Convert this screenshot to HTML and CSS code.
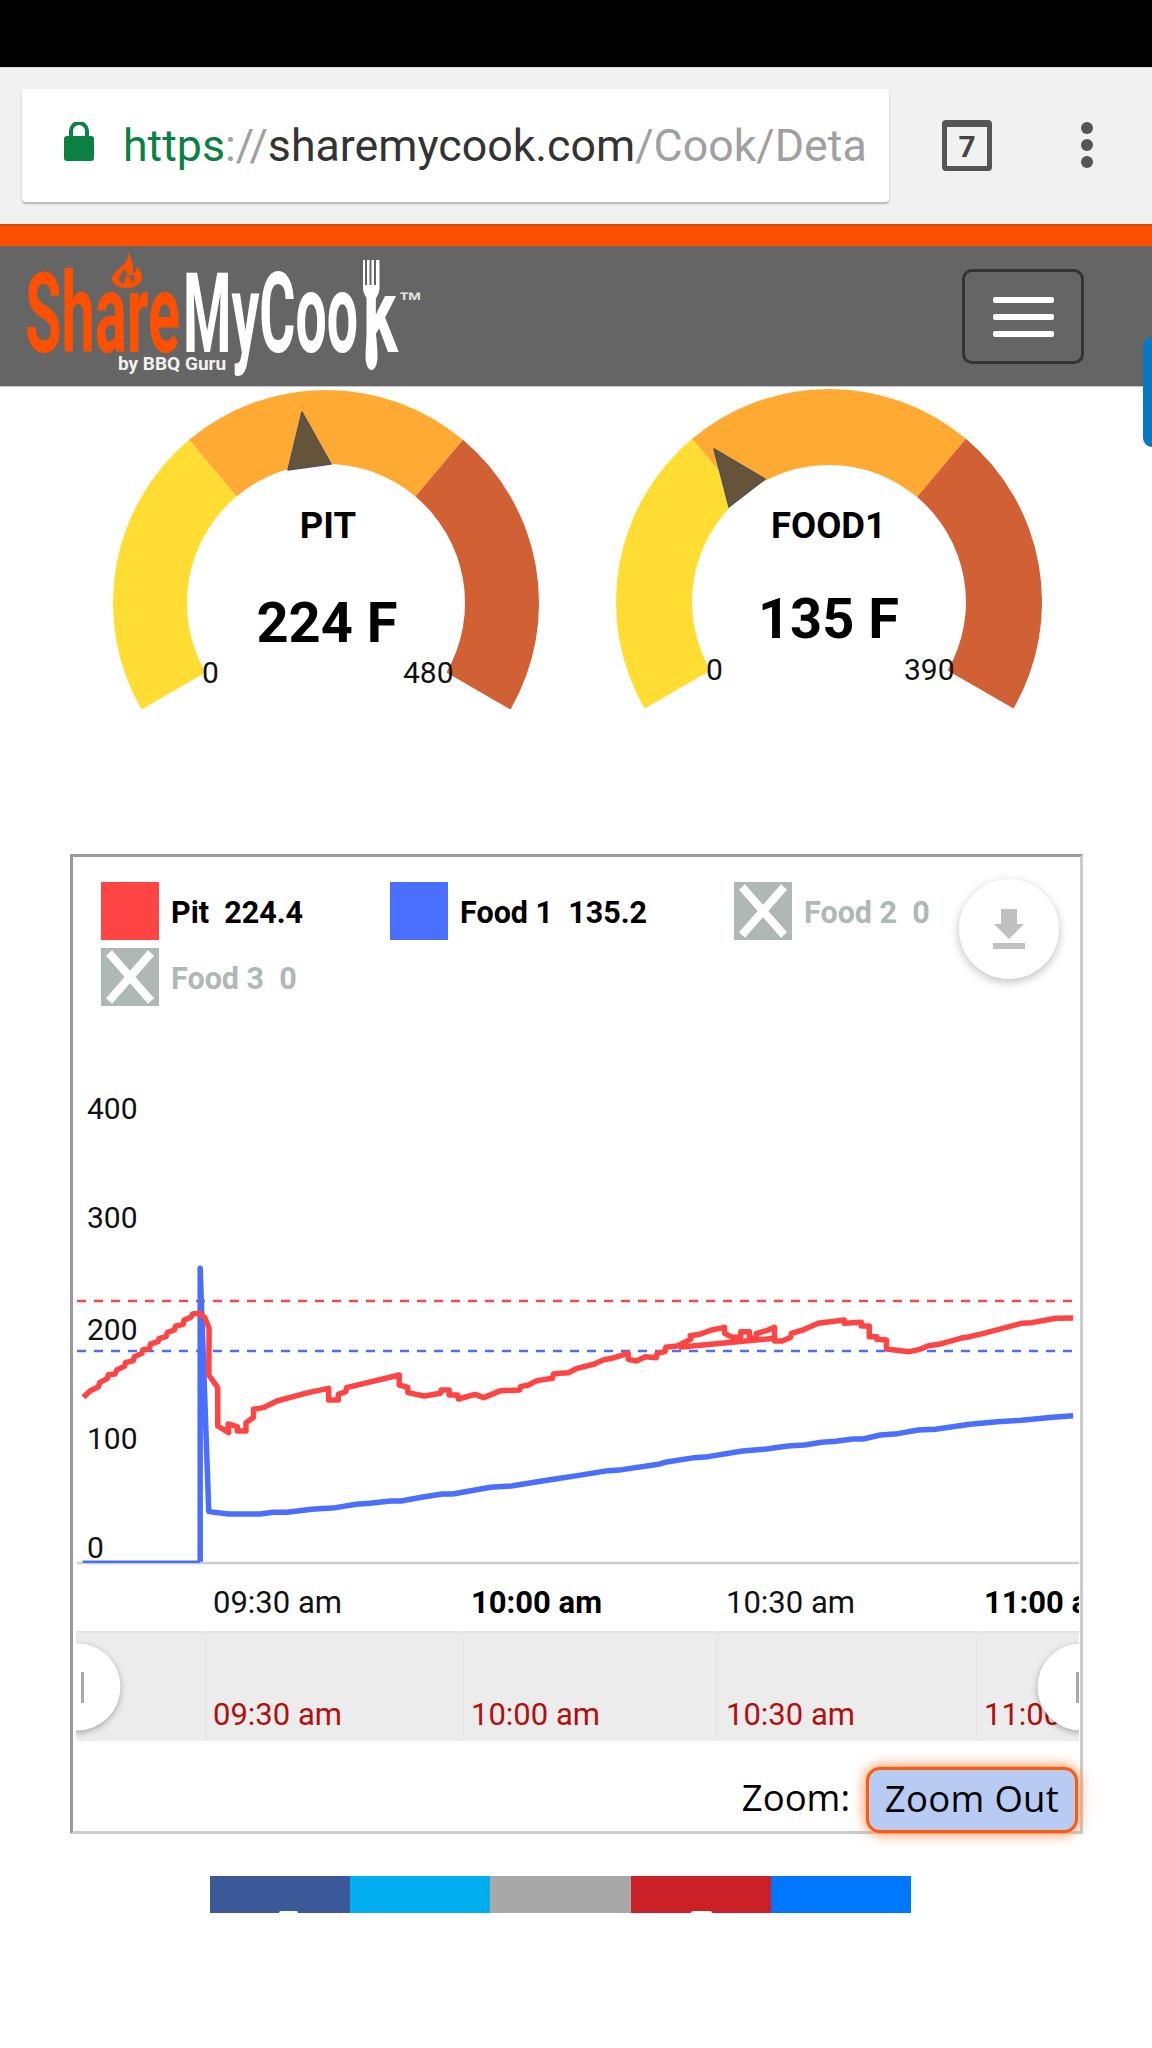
FILE: index.html
```html
<!DOCTYPE html>
<html lang="en">
<head>
<meta charset="utf-8">
<title>ShareMyCook</title>
<link rel="stylesheet" href="styles.css">
</head>
<body>
<div class="statusbar"></div>
<div class="browser">
  <div class="urlbox">
    <svg class="lock" viewBox="0 0 30 39"><path d="M7 16V9a8 8 0 0 1 16 0v7" fill="none" stroke="#0b8043" stroke-width="4"/><rect x="0" y="14" width="30" height="25" rx="3" fill="#0b8043"/></svg>
    <div class="url"><span class="u-green">https</span><span class="u-gray">://</span><span class="u-dark">sharemycook.com</span><span class="u-gray">/Cook/Deta</span></div>
  </div>
  <div class="tabs"><span>7</span></div>
  <div class="dots"><i></i><i></i><i></i></div>
</div>
<div class="orange"></div>
<header class="sitehead">
  <svg class="logo" viewBox="0 246 440 140">
    <defs><clipPath id="karm"><rect x="360" y="296" width="45" height="60"/></clipPath></defs>
    <path class="l-orange" fill-rule="evenodd" d="M126 247C131 256 127 262 121 267C115 272 111 276 112 280C113 285 119 288 127 288C136 288 142 283 142 277C142 272 139 269 137 266C137 270 135 273 133 273C134 266 131 256 126 247ZM124 268C124 273 118 276 119 280C120 283 123 284 125 284C123 280 125 277 128 274C129 278 133 279 131 283C135 281 136 276 133 275C129 277 126 273 124 268Z"/>
    <text class="l-text l-orange" x="25" y="352" textLength="155" lengthAdjust="spacingAndGlyphs">Share</text>
    <text class="l-text l-white" x="183" y="352" textLength="175" lengthAdjust="spacingAndGlyphs">MyCoo</text>
    <text class="l-text l-white" x="363" y="352" textLength="35" lengthAdjust="spacingAndGlyphs" clip-path="url(#karm)">k</text>
    <path class="l-white" d="M363 260h2v25h2v-25h2.500v25h2v-25h2.500v25h2v-25h2.500l1 0v28c0 7-5 11-6 16c0 16 4 36 4 52c0 9-3 14-6 14s-6-5-6-14c0-16 4-36 4-52c-1-5-6.500-9-6.500-16z"/>
    <text class="l-tm" x="399" y="309">™</text>
    <text class="l-by" x="118" y="370">by BBQ Guru</text>
  </svg>
  <button class="burger" type="button"><i></i><i></i><i></i></button>
</header>
<div class="sidetab"></div>

<section class="gauges">
  <svg class="gauge" viewBox="76 387 500 340">
    <path class="g-y" d="M141.500 709.500A213 213 0 0 1 189.100 439.800L236.600 496.500A139 139 0 0 0 205.600 672.500Z"/>
    <path class="g-o" d="M189.100 439.800A213 213 0 0 1 462.900 439.800L415.400 496.500A139 139 0 0 0 236.600 496.500Z"/>
    <path class="g-r" d="M462.900 439.800A213 213 0 0 1 510.500 709.500L446.400 672.500A139 139 0 0 0 415.400 496.500Z"/>
    <polygon class="g-needle" points="302,412 288,470 331,464"/>
    <text class="g-name" x="328" y="538">PIT</text>
    <text class="g-value" x="327" y="642">224 F</text>
    <text class="g-lim" x="202" y="683">0</text>
    <text class="g-lim" x="403" y="683">480</text>
  </svg>
  <svg class="gauge" viewBox="579 387 500 340">
    <path class="g-y" d="M644.500 708.500A213 213 0 0 1 692.100 438.800L740.900 497.100A137 137 0 0 0 710.400 670.500Z"/>
    <path class="g-o" d="M692.100 438.800A213 213 0 0 1 965.900 438.800L917.100 497.100A137 137 0 0 0 740.900 497.100Z"/>
    <path class="g-r" d="M965.900 438.800A213 213 0 0 1 1013.500 708.500L947.600 670.500A137 137 0 0 0 917.100 497.100Z"/>
    <polygon class="g-needle" points="714,449 765,479 729,507"/>
    <text class="g-name" x="828.500" y="538">FOOD1</text>
    <text class="g-value" x="828.500" y="638">135 F</text>
    <text class="g-lim" x="706" y="680">0</text>
    <text class="g-lim" x="904" y="680">390</text>
  </svg>
</section>

<section class="chart">
  <div class="legend">
    <div class="item w1"><span class="sw red"></span><span class="lbl">Pit  224.4</span></div>
    <div class="item w2"><span class="sw blue"></span><span class="lbl">Food 1  135.2</span></div>
    <div class="item w3 off"><svg class="sw" viewBox="0 0 58 58"><rect width="58" height="58" fill="#b0b8b6"/><path d="M8 5L50 53M50 5L8 53" stroke="#fff" stroke-width="8"/></svg><span class="lbl">Food 2  0</span></div>
    <div class="item w3 off"><svg class="sw" viewBox="0 0 58 58"><rect width="58" height="58" fill="#b0b8b6"/><path d="M8 5L50 53M50 5L8 53" stroke="#fff" stroke-width="8"/></svg><span class="lbl">Food 3  0</span></div>
  </div>
  <button class="dl" type="button"><svg viewBox="0 0 32 40"><path d="M8 0h16v15h7L16 30L1 15h7z" fill="#c0c0c0"/><rect y="34" width="32" height="6" fill="#c0c0c0"/></svg></button>

  <svg class="plot" viewBox="73 1014 1006 617">
    <text class="ax ax-y" x="87" y="1119">400</text>
    <text class="ax ax-y" x="87" y="1227.500">300</text>
    <text class="ax ax-y" x="87" y="1340">200</text>
    <text class="ax ax-y" x="87" y="1448.500">100</text>
    <text class="ax ax-y" x="87" y="1558">0</text>
    <line class="dash d-red" x1="77" y1="1301" x2="1077" y2="1301"/>
    <line class="dash d-blue" x1="77" y1="1351" x2="1077" y2="1351"/>
    <line class="axis" x1="77" y1="1563" x2="1079" y2="1563"/>
    <g transform="translate(60 1240) scale(.3444 .3333)">
      <polyline class="ln-base" points="66,965 407,965"/>
      <polyline class="ln ln-blue" points="407,965 407,85 432,815 490,822 580,822 620,817 660,817 730,808 800,803 860,793 900,790 960,783 990,783 1050,772 1110,762 1140,762 1250,742 1310,738 1400,723 1452,715"/>
      <polyline class="ln ln-red" points="68,472 88,452 112,440 115,428 138,415 140,404 160,402 165,390 188,378 190,368 213,362 216,350 238,340 240,330 260,325 263,312 285,305 288,295 308,290 312,277 332,270 336,258 358,253 360,240 380,232 385,222 405,220 420,232 433,265 432,405 458,443 458,558 490,578 488,552 515,560 515,573 540,573 540,548 562,532 562,508 590,503 630,483 720,458 780,445 780,480 808,480 808,463 830,455 832,443 985,405 985,435 1010,442 1010,458 1058,468 1105,460 1107,450 1130,450 1130,465 1155,465 1157,477 1205,463 1230,473 1280,452 1335,450 1337,440 1360,435 1385,422 1430,415 1433,402 1452,400"/>
    </g>
    <g transform="translate(560 1240) scale(.3444 .3333)">
      <polyline class="ln ln-blue" points="0,715 50,707 140,692 180,689 290,672 310,666 390,653 430,650 530,633 600,627 660,618 710,615 760,607 800,604 850,597 880,597 930,585 980,581 1040,570 1090,568 1190,553 1270,545 1340,541 1430,532 1490,527"/>
      <polyline class="ln ln-red" points="0,400 25,398 50,385 100,372 125,360 150,355 198,340 198,358 222,363 248,350 280,353 282,340 305,335 307,322 340,318 380,298 378,287 405,283 440,270 478,262 478,280 500,292 525,292 525,275 550,275 550,295 570,295 570,280 600,272 623,262 623,303 645,303 670,292 672,280 705,270 750,250 825,240 825,250 875,247 875,258 898,258 898,290 920,290 920,298 948,300 948,327 1015,335 1045,328 1070,317 1100,313 1170,293 1190,290 1230,280 1340,250 1370,248 1440,235 1490,234"/>
      <polyline class="ln ln-red" points="345,322 620,295"/>
    </g>
    <text class="ax" x="213" y="1613">09:30 am</text>
    <text class="ax ax-b" x="471" y="1613">10:00 am</text>
    <text class="ax" x="726" y="1613">10:30 am</text>
    <text class="ax ax-b" x="984" y="1613">11:00 am</text>
  </svg>

  <svg class="range" viewBox="76 1631 1003 110">
    <rect class="r-bg" x="76" y="1631" width="1003" height="110"/>
    <rect class="r-top" x="76" y="1631" width="1003" height="2"/>
    <path class="r-tick" d="M206 1631V1741M463 1631V1741M717 1631V1741M977 1631V1741"/>
    <text class="r-lbl" x="213" y="1725">09:30 am</text>
    <text class="r-lbl" x="471" y="1725">10:00 am</text>
    <text class="r-lbl" x="726" y="1725">10:30 am</text>
    <text class="r-lbl" x="984" y="1725">11:00 am</text>
    <circle class="r-h" cx="77" cy="1687" r="43.500"/>
    <circle class="r-h" cx="1081" cy="1687" r="43.500"/>
    <rect class="r-grip" x="81" y="1672" width="3" height="31"/>
    <rect class="r-grip" x="1076" y="1672" width="3" height="31"/>
  </svg>

  <div class="zoomrow">
    <span class="zlabel">Zoom:</span>
    <button class="zbtn" type="button">Zoom Out</button>
  </div>
</section>

<nav class="share">
  <span class="s-fb"><i class="bump b1"></i></span>
  <span class="s-tw"></span>
  <span class="s-gr"></span>
  <span class="s-pi"><i class="bump b2"></i></span>
  <span class="s-bl"></span>
</nav>
</body>
</html>
```
FILE: styles.css
```css
* { box-sizing: border-box; }
html, body { margin: 0; padding: 0; background: #fff; }
body { width: 1152px; height: 2048px; overflow: hidden; position: relative; font-family: Roboto, sans-serif; color: #000; }

.statusbar { height: 67px; background: #000; }

.browser { height: 157px; background: #f1f1f1; border-top: 1px solid #dcdcdc; display: flex; align-items: flex-start; position: relative; }
.urlbox { margin: 21px 0 0 22px; width: 867px; height: 113px; background: #fff; border-radius: 4px; box-shadow: 0 2px 2px rgba(0,0,0,.25); display: flex; align-items: center; padding-left: 42px; }
.lock { width: 30px; height: 39px; flex: none; margin-top: -8px; }
.url { margin-left: 29px; width: 742px; overflow: hidden; white-space: nowrap; font-size: 44.700px; line-height: 60px; margin-top: 0; }
.u-green { color: #0b8043; }
.u-gray { color: #a0a0a0; }
.u-dark { color: #333; }
.tabs { margin: 52px 0 0 53px; width: 50px; height: 51px; border: 5px solid #555; border-top-width: 7px; border-radius: 4px; display: flex; align-items: center; justify-content: center; font-size: 30px; font-weight: 700; color: #444; }
.dots { margin: 54px 0 0 89px; display: flex; flex-direction: column; gap: 5px; }
.dots i { display: block; width: 12px; height: 12px; border-radius: 50%; background: #555; }

.orange { height: 22px; background: #ff5000; border-top: 2px solid #d84800; }

.sitehead { height: 141px; background: #656565; border-bottom: 1px solid #c8c8c8; display: flex; align-items: flex-start; justify-content: space-between; padding-right: 68px; }
.logo { width: 440px; height: 140px; display: block; }
.l-orange { fill: #ff5000; }
.l-white { fill: #fff; }
.l-text { font-family: Roboto, sans-serif; font-size: 112px; font-weight: 700; }
.l-tm { font-family: "Liberation Sans", sans-serif; font-size: 24px; font-weight: 700; fill: #e4e4e4; }
.l-by { font-family: Roboto, sans-serif; font-size: 19px; font-weight: 700; fill: #f2f2f2; }
.burger { margin-top: 23px; width: 122px; height: 95px; background: transparent; border: 3px solid #333; border-radius: 10px; padding: 0; display: flex; flex-direction: column; align-items: center; gap: 11px; padding-top: 25px; }
.burger i { display: block; width: 61px; height: 6px; background: #fff; border-radius: 2px; }

.sidetab { position: absolute; left: 1143px; top: 337px; width: 9px; height: 110px; background: #0a78c0; border-radius: 9px 0 0 9px; }

.gauges { display: flex; gap: 3px; padding-left: 76px; height: 340px; }
.gauge { width: 500px; height: 340px; display: block; flex: none; }
.g-y { fill: #ffdd33; }
.g-o { fill: #ffab33; }
.g-r { fill: #d16034; }
.g-needle { fill: #65533a; stroke: #4f5358; stroke-width: 1.500; stroke-linejoin: round; }
.g-name, .g-value { text-anchor: middle; font-weight: 700; fill: #000; }
.g-name { font-size: 36.500px; }
.g-value { font-size: 56px; }
.g-lim { font-size: 30px; fill: #111; }

.chart { position: relative; margin: 127px 0 0 70px; width: 1013px; height: 980px; border: 3px solid #ccc; border-top-color: #999; border-left-color: #999; }
.legend { display: flex; flex-wrap: wrap; width: 870px; padding: 25px 0 0 28px; }
.item { display: flex; align-items: center; height: 66px; white-space: pre; font-size: 30.500px; font-weight: 700; padding-bottom: 6px; }
.w1 { width: 289px; }
.w2 { width: 344px; }
.w3 { width: 200px; }
.sw { display: block; width: 58px; height: 58px; flex: none; margin-right: 12px; align-self: flex-start; }
.red { background: #ff4444; }
.blue { background: #4a6fff; }
.off { color: #aeb8b6; }
.dl { position: absolute; left: 886px; top: 22px; width: 100px; height: 100px; border-radius: 50%; border: 0; padding: 0; background: #fff; box-shadow: 0 3px 10px rgba(0,0,0,.25); display: flex; align-items: center; justify-content: center; }
.dl svg { width: 32px; height: 40px; display: block; }

.plot { display: block; width: 1006px; height: 617px; }
.ax { font-size: 31px; fill: #111; }
.ax-y { font-size: 30px; }
.ax-b { font-weight: 700; fill: #000; }
.dash { stroke-width: 2.500; stroke-dasharray: 9 8; }
.d-red { stroke: #ff4444; }
.d-blue { stroke: #4a6fff; }
.axis { stroke: #ccc; stroke-width: 2.500; }
.ln { fill: none; stroke-width: 5.500; stroke-linejoin: round; vector-effect: non-scaling-stroke; }
.ln-red { stroke: #ff4444; }
.ln-blue { stroke: #4a6fff; }
.ln-base { fill: none; stroke: #4a6fff; stroke-width: 2.500; vector-effect: non-scaling-stroke; }

.range { display: block; width: 1003px; height: 110px; margin-left: 3px; }
.r-bg { fill: #ececec; }
.r-top { fill: #e2e2e2; }
.r-tick { stroke: #e8e8e8; stroke-width: 2; fill: none; }
.r-lbl { font-size: 31px; fill: #b30f0f; }
.r-h { fill: #fff; filter: drop-shadow(0 2px 3px rgba(0,0,0,.3)); }
.r-grip { fill: #aaa; }

.zoomrow { display: flex; align-items: flex-start; justify-content: flex-end; gap: 16px; height: 90px; padding: 26px 2px 0 0; font-family: "Open Sans", "Noto Sans", sans-serif; font-size: 36.500px; color: #000; }
.zlabel { line-height: 61px; }
.zbtn { flex: none; width: 212px; height: 66px; padding: 0 0 5px; font: inherit; letter-spacing: .3px; line-height: 50px; color: #000; background: #b8ccf3; border: 3px solid #ff5a0a; border-radius: 14px; box-shadow: 0 0 14px #ff7a30; }

.share { display: flex; margin: 42px 0 0 210px; width: 701px; height: 37px; overflow: hidden; position: relative; }
.share span { flex: 1 1 0; display: block; }
.s-fb { background: #3b5998; }
.s-tw { background: #00aeef; }
.s-gr { background: #a8a8a8; }
.s-pi { background: #cb2027; }
.s-bl { background: #0077ff; }
.bump { position: absolute; bottom: 0; height: 2px; background: #fff; border-radius: 6px 6px 0 0; }
.b1 { left: 69px; width: 19px; }
.b2 { left: 481px; width: 21px; }
```
